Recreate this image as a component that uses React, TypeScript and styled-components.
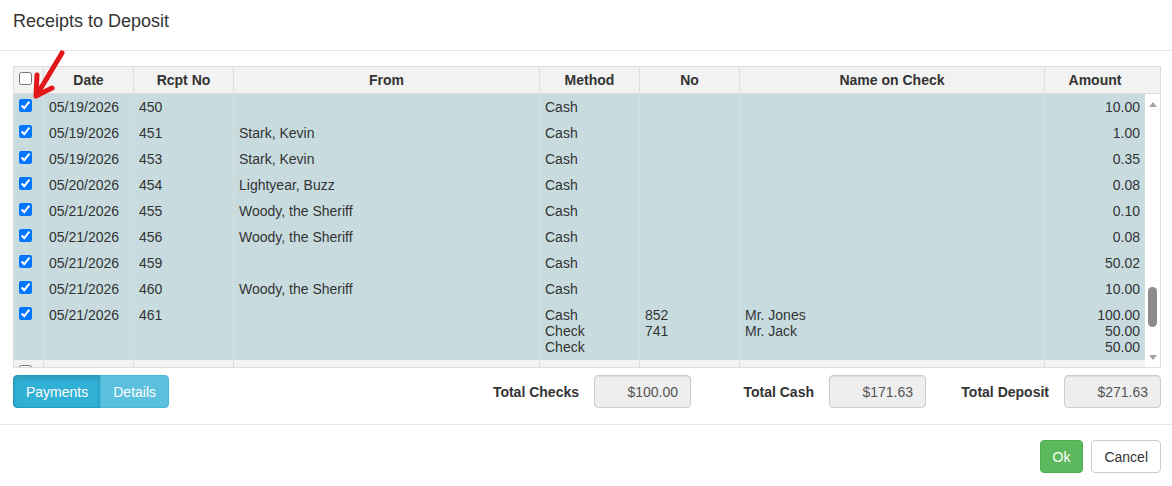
import React from "react";
import styled, { createGlobalStyle } from "styled-components";

const GlobalStyle = createGlobalStyle`
  html, body { margin: 0; padding: 0; background: #fff; }
  body {
    font-family: "Liberation Sans", Arial, Helvetica, sans-serif;
    font-size: 14px;
    color: #333;
  }
  *, *::before, *::after { box-sizing: border-box; }
`;

const HEAD_COLS = "30px 90px 100px 306px 100px 100px 305px 115px";
const BODY_COLS = "30px 90px 100px 306px 100px 100px 305px 100px";

type Receipt = {
  date: string;
  rcpt: string;
  from: string;
  method: string;
  no: string;
  name: string;
  amount: string;
  checked: boolean;
};

const receipts: Receipt[] = [
  { date: "05/19/2026", rcpt: "450", from: "", method: "Cash", no: "", name: "", amount: "10.00", checked: true },
  { date: "05/19/2026", rcpt: "451", from: "Stark, Kevin", method: "Cash", no: "", name: "", amount: "1.00", checked: true },
  { date: "05/19/2026", rcpt: "453", from: "Stark, Kevin", method: "Cash", no: "", name: "", amount: "0.35", checked: true },
  { date: "05/20/2026", rcpt: "454", from: "Lightyear, Buzz", method: "Cash", no: "", name: "", amount: "0.08", checked: true },
  { date: "05/21/2026", rcpt: "455", from: "Woody, the Sheriff", method: "Cash", no: "", name: "", amount: "0.10", checked: true },
  { date: "05/21/2026", rcpt: "456", from: "Woody, the Sheriff", method: "Cash", no: "", name: "", amount: "0.08", checked: true },
  { date: "05/21/2026", rcpt: "459", from: "", method: "Cash", no: "", name: "", amount: "50.02", checked: true },
  { date: "05/21/2026", rcpt: "460", from: "Woody, the Sheriff", method: "Cash", no: "", name: "", amount: "10.00", checked: true },
  {
    date: "05/21/2026",
    rcpt: "461",
    from: "",
    method: "Cash\nCheck\nCheck",
    no: "852\n741",
    name: "Mr. Jones\nMr. Jack",
    amount: "100.00\n50.00\n50.00",
    checked: true,
  },
];

const Page = styled.div`
  position: relative;
  width: 1172px;
  height: 486px;
  overflow: hidden;
`;

const ModalHeader = styled.div`
  padding: 8px 13px 16px;
  border-bottom: 1px solid #e5e5e5;
`;

const Title = styled.h4`
  margin: 0;
  font-size: 18px;
  line-height: 26px;
  font-weight: normal;
  color: #333;
`;

const ModalBody = styled.div`
  padding: 15px 11px 16px 13px;
`;

const Table = styled.div`
  border: 1px solid #ddd;
`;

const HeadRow = styled.div`
  display: grid;
  grid-template-columns: ${HEAD_COLS};
  background: #f2f2f2;
  border-bottom: 1px solid #ddd;
`;

const HeadCell = styled.div`
  padding: 5px;
  line-height: 16px;
  font-weight: bold;
  text-align: center;
  color: #333;
  border-right: 1px solid #ddd;
  &:last-child {
    border-right: none;
    /* keep the last heading clear of the body's scrollbar */
    padding-right: 20px;
  }
`;

const BodyFrame = styled.div`
  display: flex;
  height: 273px;
`;

const RowsViewport = styled.div`
  flex: 1;
  overflow: hidden;
`;

const Row = styled.div<{ $selected: boolean }>`
  display: grid;
  grid-template-columns: ${BODY_COLS};
  background: ${(p) => (p.$selected ? "#c8dcdf" : "#f2f2f2")};
`;

const Cell = styled.div<{ $selected: boolean; $right?: boolean }>`
  padding: 5px;
  line-height: 16px;
  min-height: 26px;
  white-space: pre-line;
  color: #333;
  text-align: ${(p) => (p.$right ? "right" : "left")};
  border-right: 1px solid ${(p) => (p.$selected ? "#d6dfe0" : "#ddd")};
  &:last-child {
    border-right: none;
  }
`;

const CheckCell = styled.div<{ $selected?: boolean }>`
  padding: 5px;
  border-right: 1px solid ${(p) => (p.$selected ? "#d6dfe0" : "#ddd")};
`;

const Check = styled.input.attrs({ type: "checkbox" })`
  display: block;
  margin: 0;
  width: 13px;
  height: 13px;
`;

const ScrollTrack = styled.div`
  width: 15px;
  background: #fff;
  display: flex;
  flex-direction: column;
  align-items: center;
  padding: 8px 0 7px;
`;

const ScrollArrow = styled.div<{ $down?: boolean }>`
  width: 0;
  height: 0;
  border-left: 4px solid transparent;
  border-right: 4px solid transparent;
  ${(p) =>
    p.$down ? "border-top: 5px solid #a3a3a3;" : "border-bottom: 5px solid #a3a3a3;"}
`;

const ThumbRail = styled.div`
  flex: 1;
  width: 100%;
  display: flex;
  justify-content: center;
`;

const Thumb = styled.div<{ $offset: number }>`
  margin-top: ${(p) => p.$offset}px;
  width: 9px;
  height: 40px;
  border-radius: 5px;
  background: #8b8b8b;
`;

const Controls = styled.div`
  margin-top: 7px;
  display: flex;
  justify-content: space-between;
  align-items: center;
`;

const ButtonGroup = styled.div`
  display: flex;
`;

const ToggleButton = styled.button<{ $active?: boolean }>`
  height: 33px;
  padding: 6px 12px;
  font-family: inherit;
  font-size: 14px;
  line-height: 20px;
  color: #fff;
  cursor: pointer;
  background: ${(p) => (p.$active ? "#31b0d5" : "#5bc0de")};
  border: 1px solid ${(p) => (p.$active ? "#269abc" : "#46b8da")};
  box-shadow: ${(p) => (p.$active ? "inset 0 3px 5px rgba(0,0,0,0.125)" : "none")};
  border-radius: 0;
  &:first-child {
    border-radius: 4px 0 0 4px;
  }
  &:last-child {
    border-radius: 0 4px 4px 0;
    margin-left: -1px;
  }
`;

const Totals = styled.div`
  display: grid;
  grid-template-columns: repeat(3, 235px);
`;

const TotalGroup = styled.label`
  display: grid;
  grid-template-columns: 1fr 97px;
  column-gap: 15px;
  align-items: center;
`;

const TotalLabel = styled.span`
  text-align: right;
  font-weight: bold;
  color: #333;
`;

const TotalInput = styled.input`
  width: 97px;
  height: 33px;
  padding: 6px 12px;
  font-family: inherit;
  font-size: 14px;
  color: #555;
  text-align: right;
  background: #eee;
  border: 1px solid #ccc;
  border-radius: 4px;
  box-shadow: inset 0 1px 1px rgba(0, 0, 0, 0.075);
  outline: none;
`;

const ModalFooter = styled.div`
  border-top: 1px solid #e5e5e5;
  padding: 15px 11px 13px;
  display: flex;
  justify-content: flex-end;
  gap: 8px;
`;

const ActionButton = styled.button<{ $primary?: boolean }>`
  height: 33px;
  padding: 6px 12px;
  font-family: inherit;
  font-size: 14px;
  line-height: 20px;
  border-radius: 4px;
  cursor: pointer;
  color: ${(p) => (p.$primary ? "#fff" : "#333")};
  background: ${(p) => (p.$primary ? "#5cb85c" : "#fff")};
  border: 1px solid ${(p) => (p.$primary ? "#4cae4c" : "#ccc")};
`;

const Pointer = styled.svg`
  position: absolute;
  left: 0;
  top: 0;
  width: 80px;
  height: 110px;
  pointer-events: none;
`;

const headers = ["Date", "Rcpt No", "From", "Method", "No", "Name on Check", "Amount"];

export default function App() {
  return (
    <Page>
      <GlobalStyle />
      <ModalHeader>
        <Title>Receipts to Deposit</Title>
      </ModalHeader>
      <ModalBody>
        <Table>
          <HeadRow>
            <CheckCell>
              <Check readOnly checked={false} />
            </CheckCell>
            {headers.map((h) => (
              <HeadCell key={h}>{h}</HeadCell>
            ))}
          </HeadRow>
          <BodyFrame>
            <RowsViewport>
              {receipts.map((r) => (
                <Row key={r.rcpt} $selected={r.checked}>
                  <CheckCell $selected={r.checked}>
                    <Check readOnly checked={r.checked} />
                  </CheckCell>
                  <Cell $selected={r.checked}>{r.date}</Cell>
                  <Cell $selected={r.checked}>{r.rcpt}</Cell>
                  <Cell $selected={r.checked}>{r.from}</Cell>
                  <Cell $selected={r.checked}>{r.method}</Cell>
                  <Cell $selected={r.checked}>{r.no}</Cell>
                  <Cell $selected={r.checked}>{r.name}</Cell>
                  <Cell $selected={r.checked} $right>
                    {r.amount}
                  </Cell>
                </Row>
              ))}
              {/* next, unselected row just entering the scrolled view */}
              <Row $selected={false}>
                <CheckCell>
                  <Check readOnly checked={false} />
                </CheckCell>
                <Cell $selected={false} />
                <Cell $selected={false} />
                <Cell $selected={false} />
                <Cell $selected={false} />
                <Cell $selected={false} />
                <Cell $selected={false} />
                <Cell $selected={false} />
              </Row>
            </RowsViewport>
            <ScrollTrack>
              <ScrollArrow />
              <ThumbRail>
                <Thumb $offset={180} />
              </ThumbRail>
              <ScrollArrow $down />
            </ScrollTrack>
          </BodyFrame>
        </Table>
        <Controls>
          <ButtonGroup>
            <ToggleButton $active>Payments</ToggleButton>
            <ToggleButton>Details</ToggleButton>
          </ButtonGroup>
          <Totals>
            <TotalGroup>
              <TotalLabel>Total Checks</TotalLabel>
              <TotalInput readOnly value="$100.00" />
            </TotalGroup>
            <TotalGroup>
              <TotalLabel>Total Cash</TotalLabel>
              <TotalInput readOnly value="$171.63" />
            </TotalGroup>
            <TotalGroup>
              <TotalLabel>Total Deposit</TotalLabel>
              <TotalInput readOnly value="$271.63" />
            </TotalGroup>
          </Totals>
        </Controls>
      </ModalBody>
      <ModalFooter>
        <ActionButton $primary>Ok</ActionButton>
        <ActionButton>Cancel</ActionButton>
      </ModalFooter>
      <Pointer viewBox="0 0 80 110">
        <g fill="none" stroke="#e3161b" strokeWidth="5" strokeLinecap="round" strokeLinejoin="round">
          <path d="M62 53 L38 93" />
          <path d="M37 75 L36 96 L52 88" />
        </g>
      </Pointer>
    </Page>
  );
}
